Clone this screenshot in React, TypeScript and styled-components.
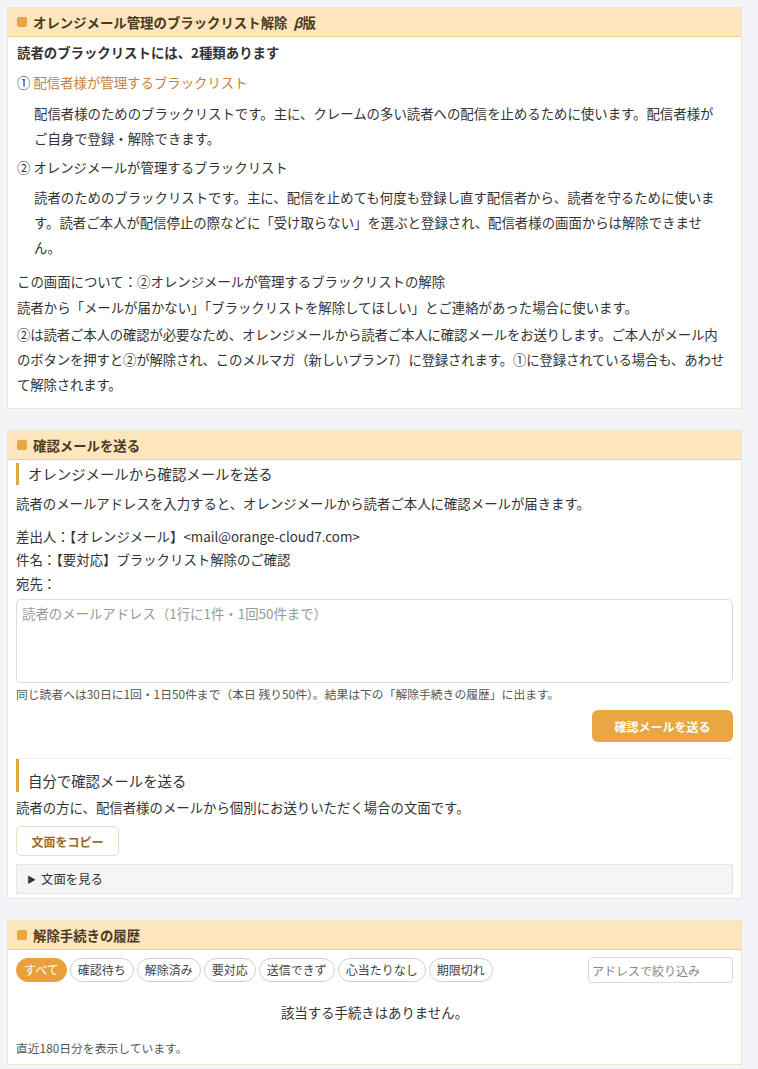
import React from 'react';
import styled, { createGlobalStyle } from 'styled-components';

const Global = createGlobalStyle`
  html, body {
    margin: 0;
    padding: 0;
    background: #f3f4f8;
  }
  body {
    font-family: "Noto Sans CJK JP", "Noto Sans", "Liberation Sans", sans-serif;
    color: #333;
    font-size: 13.4px;
  }
`;

const Page = styled.div`
  width: 735px;
  padding: 7px 0 7px 7px;
  display: flex;
  flex-direction: column;
  gap: 21px;
`;

const Card = styled.section`
  background: #fff;
  border: 1px solid #efe4cc;
`;

const CardHeader = styled.h2`
  margin: 0;
  height: 28px;
  display: flex;
  align-items: center;
  gap: 6px;
  padding: 0 9px;
  background: #fde5bd;
  border-bottom: 1px solid #f1cf94;
  font-size: 13.4px;
  font-weight: 700;
  color: #4a3a22;
`;

const Square = styled.span`
  width: 10px;
  height: 10px;
  border-radius: 2px;
  background: #e9a83f;
`;

const Body = styled.div<{ $pad?: string }>`
  padding: ${p => p.$pad || '6px 9px 10px'};
`;

const P = styled.p<{ $indent?: boolean; $bold?: boolean; $gap?: number; $tight?: boolean }>`
  margin: ${p => p.$gap ?? 4}px 0 0;
  line-height: 25px;
  padding-left: ${p => (p.$indent ? '17px' : '0')};
  font-weight: ${p => (p.$bold ? 700 : 400)};
  letter-spacing: ${p => (p.$tight ? '-0.15px' : 'normal')};
`;

const Orange = styled.span`
  color: #c8823a;
`;

const SubHead = styled.h3<{ $tall?: boolean }>`
  margin: 0;
  border-left: 3px solid #e3a644;
  padding: ${p => (p.$tall ? '11px 0 0 9px' : '0 0 0 9px')};
  font-size: 14.4px;
  font-weight: 400;
  line-height: 22px;
  color: #333;
`;

const TextArea = styled.textarea`
  display: block;
  box-sizing: border-box;
  width: 100%;
  height: 84px;
  margin-top: 3px;
  border: 1px solid #dcdcd4;
  border-radius: 5px;
  padding: 3px 5px;
  font-family: inherit;
  font-size: 13.4px;
  resize: none;
  &::placeholder {
    color: #999;
  }
`;

const Note = styled.div`
  font-size: 11.8px;
  color: #555;
  margin-top: 2px;
`;

const Actions = styled.div`
  display: flex;
  justify-content: flex-end;
  margin-top: 8px;
`;

const PrimaryButton = styled.button`
  height: 32px;
  width: 141px;
  border: none;
  border-radius: 6px;
  background: #e8a742;
  color: #fff;
  font-family: inherit;
  font-size: 12px;
  font-weight: 700;
`;

const Divider = styled.hr`
  border: none;
  border-top: 1px solid #ececec;
  margin: 16px 0 0;
`;

const CopyButton = styled.button`
  margin-top: 6px;
  height: 30px;
  width: 103px;
  border: 1px solid #ecdcbc;
  border-radius: 5px;
  background: #fff;
  color: #a06a25;
  font-family: inherit;
  font-size: 12px;
  font-weight: 700;
`;

const Details = styled.div`
  margin-top: 8px;
  height: 30px;
  box-sizing: border-box;
  display: flex;
  align-items: center;
  gap: 5px;
  padding: 0 10px;
  background: #f5f5f5;
  border: 1px solid #e6e6e6;
  font-size: 12.4px;
  color: #333;
`;

const Arrow = styled.span`
  font-size: 9px;
`;

const Toolbar = styled.div`
  display: flex;
  align-items: center;
  gap: 3px;
`;

const Pill = styled.button<{ $active?: boolean }>`
  height: 24px;
  padding: 0 7px;
  border-radius: 12px;
  border: 1px solid ${p => (p.$active ? '#e8a13a' : '#cfcfcf')};
  background: ${p => (p.$active ? '#e8a13a' : '#fff')};
  color: ${p => (p.$active ? '#fff' : '#444')};
  font-family: inherit;
  font-size: 12px;
  line-height: 22px;
`;

const Filter = styled.input`
  margin-left: auto;
  box-sizing: border-box;
  width: 145px;
  height: 26px;
  border: 1px solid #dcdcd4;
  border-radius: 4px;
  padding: 0 3px;
  font-family: inherit;
  font-size: 12px;
  &::placeholder {
    color: #888;
  }
`;

const Empty = styled.div`
  text-align: center;
  padding: 19px 0 0;
  line-height: 20px;
`;

const Footnote = styled.div`
  margin-top: 17px;
  font-size: 11.8px;
  color: #555;
`;

const tabs = ['すべて', '確認待ち', '解除済み', '要対応', '送信できず', '心当たりなし', '期限切れ'];

export default function App() {
  return (
    <>
      <Global />
      <Page>
        <Card>
          <CardHeader>
            <Square />
            オレンジメール管理のブラックリスト解除 <span><i>β</i>版</span>
          </CardHeader>
          <Body $pad="3px 16px 11px 9px">
            <P $bold $gap={0}>読者のブラックリストには、2種類あります</P>
            <P $gap={5}>① <Orange>配信者様が管理するブラックリスト</Orange></P>
            <P $indent $gap={6}>
              配信者様のためのブラックリストです。主に、クレームの多い読者への配信を止めるために使います。配信者様がご自身で登録・解除できます。
            </P>
            <P $gap={4}>② オレンジメールが管理するブラックリスト</P>
            <P $indent $gap={5}>
              読者のためのブラックリストです。主に、配信を止めても何度も登録し直す配信者から、読者を守るために使います。読者ご本人が配信停止の際などに「受け取らない」を選ぶと登録され、配信者様の画面からは解除できません。
            </P>
            <P $gap={9}>この画面について：②オレンジメールが管理するブラックリストの解除</P>
            <P $gap={1}>読者から「メールが届かない」「ブラックリストを解除してほしい」とご連絡があった場合に使います。</P>
            <P $gap={2} $tight>
              ②は読者ご本人の確認が必要なため、オレンジメールから読者ご本人に確認メールをお送りします。ご本人がメール内のボタンを押すと②が解除され、このメルマガ（新しいプラン7）に登録されます。①に登録されている場合も、あわせて解除されます。
            </P>
          </Body>
        </Card>

        <Card>
          <CardHeader>
            <Square />
            確認メールを送る
          </CardHeader>
          <Body $pad="3px 8px 4px">
            <SubHead>オレンジメールから確認メールを送る</SubHead>
            <P $gap={6}>読者のメールアドレスを入力すると、オレンジメールから読者ご本人に確認メールが届きます。</P>
            <P $gap={8}>差出人：【オレンジメール】&lt;mail@orange-cloud7.com&gt;</P>
            <P $gap={-2}>件名：【要対応】ブラックリスト解除のご確認</P>
            <P $gap={-1}>宛先：</P>
            <TextArea placeholder="読者のメールアドレス（1行に1件・1回50件まで）" />
            <Note>同じ読者へは30日に1回・1日50件まで（本日 残り50件）。結果は下の「解除手続きの履歴」に出ます。</Note>
            <Actions>
              <PrimaryButton>確認メールを送る</PrimaryButton>
            </Actions>
            <Divider />
            <SubHead $tall>自分で確認メールを送る</SubHead>
            <P $gap={3}>読者の方に、配信者様のメールから個別にお送りいただく場合の文面です。</P>
            <CopyButton>文面をコピー</CopyButton>
            <Details>
              <Arrow>▶</Arrow>
              文面を見る
            </Details>
          </Body>
        </Card>

        <Card>
          <CardHeader>
            <Square />
            解除手続きの履歴
          </CardHeader>
          <Body $pad="7px 8px 8px">
            <Toolbar>
              {tabs.map((t, i) => (
                <Pill key={t} $active={i === 0}>{t}</Pill>
              ))}
              <Filter placeholder="アドレスで絞り込み" />
            </Toolbar>
            <Empty>該当する手続きはありません。</Empty>
            <Footnote>直近180日分を表示しています。</Footnote>
          </Body>
        </Card>
      </Page>
    </>
  );
}
